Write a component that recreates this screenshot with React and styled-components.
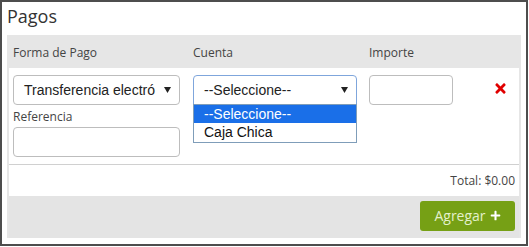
import React from "react"
import styled, { createGlobalStyle } from "styled-components"
import { FaTimes, FaPlus } from "react-icons/fa"

const GlobalStyle = createGlobalStyle`
  body {
    margin: 0;
    background: #fff;
    font-family: "Open Sans", sans-serif;
  }
`

const Box = styled.div`
  width: 528px;
  height: 246px;
  box-sizing: border-box;
  border: 2px solid #4d4d4d;
  padding: 0 5px 6px;
  background: #fff;
`

const Title = styled.h2`
  margin: 0;
  padding: 1px 0 6px;
  font-size: 18px;
  line-height: 26px;
  font-weight: 400;
  color: #333;
`

const Panel = styled.div`
  background: #e6e6e6;
  padding: 0 2px;
`

const Grid = styled.div`
  display: grid;
  grid-template-columns: 180px 176px 1fr 30px;
  padding: 0 4px;
`

const Header = styled(Grid)`
  height: 33px;
  align-items: center;
  padding-top: 1px;
  box-sizing: border-box;
  font-size: 12px;
  color: #444;
`

const Row = styled(Grid)`
  background: #fff;
  padding-top: 7px;
  padding-bottom: 7px;
  align-items: start;
  border-bottom: 1px solid #d0d0d0;
`

const Cell = styled.div`
  position: relative;
  display: flex;
  flex-direction: column;
  align-items: flex-start;
`

const Select = styled.div`
  display: flex;
  align-items: center;
  width: ${p => p.$w}px;
  height: 30px;
  box-sizing: border-box;
  padding: 0 8px 0 10px;
  background: #fff;
  border: 1px solid ${p => (p.$open ? "#7fa6dc" : "#bdbdbd")};
  border-radius: ${p => (p.$open ? "4px 4px 0 0" : "4px")};
  font-family: "Liberation Sans", Arial, sans-serif;
  font-size: 14px;
  color: #222;
`

const SelectText = styled.span`
  flex: 1;
  min-width: 0;
  white-space: nowrap;
`

const Arrow = () => (
  <svg width="7" height="6" viewBox="0 0 7 6">
    <path d="M0 0 H7 L3.5 6 Z" fill="#222" />
  </svg>
)

const Dropdown = styled.div`
  position: absolute;
  top: 29px;
  left: 0;
  width: 164px;
  box-sizing: border-box;
  border: 1px solid #7f9db9;
  background: #fff;
  z-index: 2;
`

const Option = styled.div`
  height: ${p => p.$h}px;
  line-height: ${p => p.$h}px;
  padding-left: 10px;
  font-family: "Liberation Sans", Arial, sans-serif;
  font-size: 14px;
  background: ${p => (p.$active ? "#1a6fe8" : "#fff")};
  color: ${p => (p.$active ? "#fff" : "#111")};
`

const Label = styled.div`
  margin: 3px 0 2px;
  height: 17px;
  line-height: 17px;
  font-size: 12px;
  color: #444;
`

const Input = styled.div`
  width: ${p => p.$w}px;
  height: 30px;
  box-sizing: border-box;
  border: 1px solid #bdbdbd;
  border-radius: 4px;
  background: #fff;
`

const Remove = styled.div`
  display: flex;
  justify-content: center;
  padding-top: 6px;
  color: #e00000;
`

const Total = styled.div`
  background: #fff;
  height: 31px;
  line-height: 31px;
  padding-right: 4px;
  text-align: right;
  font-size: 12px;
  color: #444;
`

const Footer = styled.div`
  display: flex;
  justify-content: flex-end;
  padding: 5px 4px 7px;
  background: #e4e4e4;
`

const Button = styled.button`
  display: flex;
  align-items: center;
  justify-content: center;
  gap: 4px;
  width: 95px;
  height: 30px;
  border: none;
  border-radius: 3px;
  background: #76a015;
  color: #e4f0cc;
  font-family: "Open Sans", sans-serif;
  font-size: 14px;
  padding: 0 0 1px;
  svg { color: #fff; }
`

export default function App() {
  return (
    <>
      <GlobalStyle />
      <Box>
        <Title>Pagos</Title>
        <Panel>
          <Header>
            <div>Forma de Pago</div>
            <div>Cuenta</div>
            <div>Importe</div>
            <div />
          </Header>
          <Row>
            <Cell>
              <Select $w={167}>
                <SelectText>Transferencia electró</SelectText>
                <Arrow />
              </Select>
              <Label>Referencia</Label>
              <Input $w={167} />
            </Cell>
            <Cell>
              <Select $w={164} $open>
                <SelectText>--Seleccione--</SelectText>
                <Arrow />
              </Select>
              <Dropdown>
                <Option $h={18} $active>--Seleccione--</Option>
                <Option $h={19}>Caja Chica</Option>
              </Dropdown>
            </Cell>
            <Cell>
              <Input $w={84} />
            </Cell>
            <Remove>
              <FaTimes size={15} />
            </Remove>
          </Row>
          <Total>Total: $0.00</Total>
          <Footer>
            <Button>
              Agregar <FaPlus size={11} />
            </Button>
          </Footer>
        </Panel>
      </Box>
    </>
  )
}
